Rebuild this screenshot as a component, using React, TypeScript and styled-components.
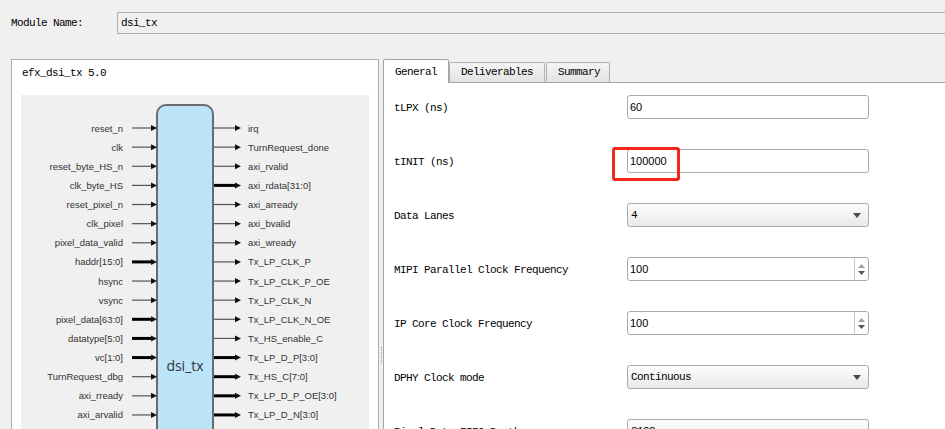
import React from "react";
import styled, { createGlobalStyle } from "styled-components";

const GlobalStyle = createGlobalStyle`
  html, body {
    margin: 0;
    height: 100%;
    overflow: hidden;
    background: #f0f0f0;
  }
  body {
    font-family: "Liberation Mono", "DejaVu Sans Mono", monospace;
    font-size: 11px;
    color: #000;
  }
  #root {
    height: 100%;
  }
`;

const Page = styled.div`
  display: flex;
  flex-direction: column;
  height: 100%;
`;

const TopBar = styled.div`
  display: flex;
  align-items: center;
  padding: 12px 0 0 11px;
`;

const FieldLabel = styled.span`
  width: 106px;
  letter-spacing: -0.6px;
`;

const ModuleInput = styled.div`
  flex: 1;
  height: 22px;
  box-sizing: border-box;
  border: 1px solid #ababab;
  border-right: none;
  border-radius: 2px 0 0 2px;
  background: #f0f0f0;
  padding-left: 3px;
  display: flex;
  align-items: center;
  letter-spacing: -0.6px;
`;

const Main = styled.div`
  flex: 1;
  min-height: 0;
  display: flex;
  margin-top: 25px;
`;

const LeftPanel = styled.div`
  width: 368px;
  margin-left: 11px;
  box-sizing: border-box;
  border: 1px solid #adadad;
  border-bottom: none;
  background: #fff;
  padding: 0 9px;
  overflow: hidden;
`;

const PanelTitle = styled.div`
  padding: 6px 0 0 1px;
  line-height: 14px;
  height: 14px;
  margin-bottom: 15px;
  letter-spacing: -0.6px;
`;

const DiagramArea = styled.div`
  background: #f0f0f0;
  svg {
    display: block;
  }
`;

const Splitter = styled.div`
  width: 4px;
  padding-top: 288px;
  display: flex;
  justify-content: center;
`;

const SplitterGrip = styled.div`
  width: 0;
  height: 16px;
  border-left: 1px dotted #9a9a9a;
`;

const TabWidget = styled.div`
  flex: 1;
  margin-right: -4px;
  display: flex;
  flex-direction: column;
`;

const TabBar = styled.div`
  display: flex;
  align-items: flex-end;
  height: 23px;
  position: relative;
  z-index: 1;
`;

const Tab = styled.div<{ $active?: boolean; $width: number; $gap?: number }>`
  width: ${(p) => p.$width}px;
  margin-left: ${(p) => p.$gap ?? 0}px;
  box-sizing: border-box;
  border: 1px solid ${(p) => (p.$active ? "#a3a3a3" : "#b0b0b0")};
  border-bottom: none;
  border-radius: 2px 2px 0 0;
  height: ${(p) => (p.$active ? 24 : 20)}px;
  margin-bottom: ${(p) => (p.$active ? -1 : 0)}px;
  padding: ${(p) => (p.$active ? 5 : 2)}px 0 0 11px;
  line-height: 14px;
  letter-spacing: -0.6px;
  background: ${(p) => (p.$active ? "#fff" : "linear-gradient(#f5f5f5, #e3e3e3)")};
`;

const TabPane = styled.div`
  flex: 1;
  background: #fff;
  border: 1px solid #a3a3a3;
  border-bottom: none;
  padding: 12px 0 0 10px;
  display: flex;
  flex-direction: column;
  gap: 30px;
  overflow: hidden;
`;

const FormRow = styled.div`
  display: flex;
  align-items: center;
  height: 24px;
  flex-shrink: 0;
`;

const RowLabel = styled.span`
  width: 233px;
  letter-spacing: -0.6px;
  padding-top: 1px;
`;

const Control = styled.div`
  position: relative;
  width: 242px;
  height: 24px;
`;

const Field = styled.div<{ $combo?: boolean }>`
  box-sizing: border-box;
  width: 100%;
  height: 100%;
  border: 1px solid #ababab;
  border-radius: 3px;
  background: ${(p) => (p.$combo ? "linear-gradient(#fdfdfd, #e9e9e9)" : "#fff")};
  display: flex;
  align-items: center;
  padding-left: ${(p) => (p.$combo ? 3 : 2)}px;
  font-family: ${(p) => (p.$combo ? '"Liberation Mono", monospace' : '"Liberation Sans", Arial, sans-serif')};
  font-size: 11px;
  letter-spacing: ${(p) => (p.$combo ? "-0.6px" : "0")};
`;

const FieldText = styled.span`
  flex: 1;
`;

const ComboArrow = styled.svg`
  width: 8px;
  height: 5px;
  margin-right: 7px;
`;

const SpinButtons = styled.div`
  width: 13px;
  height: 100%;
  border-left: 1px solid #c9c9c9;
  display: flex;
  flex-direction: column;
  align-items: center;
  justify-content: center;
  gap: 3px;
`;

const Highlight = styled.div`
  position: absolute;
  left: -15px;
  top: -2px;
  width: 68px;
  height: 34px;
  box-sizing: border-box;
  border: 3px solid #f3261e;
  border-radius: 3px;
`;

type Sig = [string, boolean];

const inputs: Sig[] = [
  ["reset_n", false],
  ["clk", false],
  ["reset_byte_HS_n", false],
  ["clk_byte_HS", false],
  ["reset_pixel_n", false],
  ["clk_pixel", false],
  ["pixel_data_valid", false],
  ["haddr[15:0]", true],
  ["hsync", false],
  ["vsync", false],
  ["pixel_data[63:0]", true],
  ["datatype[5:0]", true],
  ["vc[1:0]", true],
  ["TurnRequest_dbg", false],
  ["axi_rready", false],
  ["axi_arvalid", false],
  ["axi_araddr[15:0]", true],
];

const outputs: Sig[] = [
  ["irq", false],
  ["TurnRequest_done", false],
  ["axi_rvalid", false],
  ["axi_rdata[31:0]", true],
  ["axi_arready", false],
  ["axi_bvalid", false],
  ["axi_wready", false],
  ["Tx_LP_CLK_P", false],
  ["Tx_LP_CLK_P_OE", false],
  ["Tx_LP_CLK_N", false],
  ["Tx_LP_CLK_N_OE", false],
  ["Tx_HS_enable_C", false],
  ["Tx_LP_D_P[3:0]", true],
  ["Tx_HS_C[7:0]", true],
  ["Tx_LP_D_P_OE[3:0]", true],
  ["Tx_LP_D_N[3:0]", true],
  ["Tx_LP_D_N_OE[3:0]", true],
];

const rowY = (i: number) => 33 + i * 19.13;

const BlockDiagram = () => (
  <svg width="348" height="345" viewBox="0 0 348 345">
    <rect x="136" y="10" width="56" height="360" rx="9" fill="#bbe4f8" stroke="#6b6b6b" strokeWidth="2" />
    <text x="164" y="276" textAnchor="middle" fontFamily="'Open Sans', 'Liberation Sans', sans-serif" fontSize="14" fill="#333">
      dsi_tx
    </text>
    {inputs.map(([name, bus], i) => {
      const y = rowY(i);
      return (
        <g key={name}>
          <text x="102" y={y + 3.5} textAnchor="end" fontFamily="'Liberation Sans', Arial, sans-serif" fontSize="9.5" fill="#333">
            {name}
          </text>
          <line x1="111" y1={y} x2="132" y2={y} stroke={bus ? "#000" : "#555"} strokeWidth={bus ? 3 : 1.2} />
          <polygon points={`130,${y - 3} 136,${y} 130,${y + 3}`} fill="#111" />
        </g>
      );
    })}
    {outputs.map(([name, bus], i) => {
      const y = rowY(i);
      return (
        <g key={name}>
          <line x1="193" y1={y} x2="215" y2={y} stroke={bus ? "#000" : "#555"} strokeWidth={bus ? 3 : 1.2} />
          <polygon points={`214,${y - 3} 220,${y} 214,${y + 3}`} fill="#111" />
          <text x="227" y={y + 3.5} fontFamily="'Liberation Sans', Arial, sans-serif" fontSize="9.5" fill="#333">
            {name}
          </text>
        </g>
      );
    })}
  </svg>
);

const DownArrow = () => (
  <ComboArrow viewBox="0 0 8 5">
    <polygon points="0,0 8,0 4,5" fill="#4a4a4a" />
  </ComboArrow>
);

const Spin = () => (
  <SpinButtons>
    <svg width="7" height="4" viewBox="0 0 7 4">
      <polygon points="0,4 7,4 3.5,0" fill="#a0a0a0" />
    </svg>
    <svg width="7" height="4" viewBox="0 0 7 4">
      <polygon points="0,0 7,0 3.5,4" fill="#555" />
    </svg>
  </SpinButtons>
);

const App = () => {
  return (
    <Page>
      <GlobalStyle />
      <TopBar>
        <FieldLabel>Module Name:</FieldLabel>
        <ModuleInput>dsi_tx</ModuleInput>
      </TopBar>
      <Main>
        <LeftPanel>
          <PanelTitle>efx_dsi_tx 5.0</PanelTitle>
          <DiagramArea>
            <BlockDiagram />
          </DiagramArea>
        </LeftPanel>
        <Splitter>
          <SplitterGrip />
        </Splitter>
        <TabWidget>
          <TabBar>
            <Tab $active $width={66}>General</Tab>
            <Tab $width={96}>Deliverables</Tab>
            <Tab $width={64} $gap={1}>Summary</Tab>
          </TabBar>
          <TabPane>
            <FormRow>
              <RowLabel>tLPX (ns)</RowLabel>
              <Control>
                <Field>60</Field>
              </Control>
            </FormRow>
            <FormRow>
              <RowLabel>tINIT (ns)</RowLabel>
              <Control>
                <Field>100000</Field>
                <Highlight />
              </Control>
            </FormRow>
            <FormRow>
              <RowLabel>Data Lanes</RowLabel>
              <Control>
                <Field $combo>
                  <FieldText>4</FieldText>
                  <DownArrow />
                </Field>
              </Control>
            </FormRow>
            <FormRow>
              <RowLabel>MIPI Parallel Clock Frequency</RowLabel>
              <Control>
                <Field>
                  <FieldText>100</FieldText>
                  <Spin />
                </Field>
              </Control>
            </FormRow>
            <FormRow>
              <RowLabel>IP Core Clock Frequency</RowLabel>
              <Control>
                <Field>
                  <FieldText>100</FieldText>
                  <Spin />
                </Field>
              </Control>
            </FormRow>
            <FormRow>
              <RowLabel>DPHY Clock mode</RowLabel>
              <Control>
                <Field $combo>
                  <FieldText>Continuous</FieldText>
                  <DownArrow />
                </Field>
              </Control>
            </FormRow>
            <FormRow>
              <RowLabel>Pixel Data FIFO Depth</RowLabel>
              <Control>
                <Field $combo>
                  <FieldText>8192</FieldText>
                  <DownArrow />
                </Field>
              </Control>
            </FormRow>
          </TabPane>
        </TabWidget>
      </Main>
    </Page>
  );
};

export default App;
